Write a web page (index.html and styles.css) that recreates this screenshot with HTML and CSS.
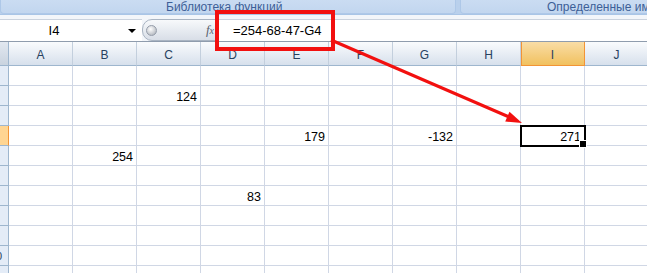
FILE: index.html
```html
<!DOCTYPE html>
<html lang="ru">
<head>
  <meta charset="UTF-8">
  <title>Лист1</title>
  <link rel="stylesheet" href="styles.css">
</head>
<body>
  <div class="ribbon">
    <div class="group group-func"><span>Библиотека функций</span></div>
    <div class="group group-names"><span>Определенные имена</span></div>
  </div>

  <div class="formula-bar">
    <div class="name-box">
      <span class="name-text">I4</span>
      <span class="dropdown"></span>
    </div>
    <div class="fx-pill">
      <span class="knob"></span>
      <span class="fx">f<small>x</small></span>
    </div>
    <div class="formula-input">=254-68-47-G4</div>
  </div>

  <table class="sheet">
    <colgroup>
      <col class="col-head">
      <col><col><col><col><col><col><col><col><col><col>
    </colgroup>
    <thead>
      <tr>
        <th class="corner"></th>
        <th>A</th><th>B</th><th>C</th><th>D</th><th>E</th>
        <th>F</th><th>G</th><th>H</th><th class="active">I</th><th>J</th>
      </tr>
    </thead>
    <tbody>
      <tr>
        <th><span>1</span></th>
        <td></td><td></td><td></td><td></td><td></td><td></td><td></td><td></td><td></td><td></td>
      </tr>
      <tr>
        <th><span>2</span></th>
        <td></td><td></td><td>124</td><td></td><td></td><td></td><td></td><td></td><td></td><td></td>
      </tr>
      <tr>
        <th><span>3</span></th>
        <td></td><td></td><td></td><td></td><td></td><td></td><td></td><td></td><td></td><td></td>
      </tr>
      <tr>
        <th class="active"><span>4</span></th>
        <td></td><td></td><td></td><td></td><td>179</td><td></td><td>-132</td><td></td><td class="selected">271</td><td></td>
      </tr>
      <tr>
        <th><span>5</span></th>
        <td></td><td>254</td><td></td><td></td><td></td><td></td><td></td><td></td><td></td><td></td>
      </tr>
      <tr>
        <th><span>6</span></th>
        <td></td><td></td><td></td><td></td><td></td><td></td><td></td><td></td><td></td><td></td>
      </tr>
      <tr>
        <th><span>7</span></th>
        <td></td><td></td><td></td><td>83</td><td></td><td></td><td></td><td></td><td></td><td></td>
      </tr>
      <tr>
        <th><span>8</span></th>
        <td></td><td></td><td></td><td></td><td></td><td></td><td></td><td></td><td></td><td></td>
      </tr>
      <tr>
        <th><span>9</span></th>
        <td></td><td></td><td></td><td></td><td></td><td></td><td></td><td></td><td></td><td></td>
      </tr>
      <tr>
        <th><span>10</span></th>
        <td></td><td></td><td></td><td></td><td></td><td></td><td></td><td></td><td></td><td></td>
      </tr>
      <tr>
        <th><span>11</span></th>
        <td></td><td></td><td></td><td></td><td></td><td></td><td></td><td></td><td></td><td></td>
      </tr>
    </tbody>
  </table>

  <!-- red callout drawn over the sheet -->
  <svg class="callout" width="647" height="273" viewBox="0 0 647 273">
    <rect x="217" y="12" width="116" height="37" fill="none" stroke="#f2100f" stroke-width="4"/>
    <line x1="331" y1="40" x2="508" y2="116.5" stroke="#f2100f" stroke-width="3"/>
    <polygon points="522,123 509.5,111.8 505.2,121.5" fill="#f2100f"/>
  </svg>
</body>
</html>
```

FILE: styles.css
```css
* {
  box-sizing: border-box;
}

body {
  margin: 0;
  width: 647px;
  height: 273px;
  overflow: hidden;
  position: relative;
  background: #fff;
  font-family: "Liberation Sans", Arial, sans-serif;
  color: #000;
}

/* ribbon strip */
.ribbon {
  display: flex;
  gap: 4px;
  height: 15px;
  background: #b9d0ec;
  border-bottom: 1px solid #a9c5e6;
  overflow: hidden;
}

.group {
  height: 14px;
  background: linear-gradient(#cadcf2, #c2d6ef);
  border: 1px solid #aec8e8;
  border-top: none;
  border-radius: 0 0 4px 4px;
  font-size: 12px;
  line-height: 14px;
  color: #3d5f97;
  white-space: nowrap;
}

.group-func {
  flex: 0 0 456px;
  padding-left: 165px;
}

.group-names {
  flex: 0 0 260px;
  padding-left: 86px;
}

/* formula bar */
.formula-bar {
  display: flex;
  height: 27px;
  padding-top: 4px;
  background: #f3f6fa;
  border-bottom: 1px solid #8f9cad;
}

.name-box {
  width: 142px;
  display: flex;
  align-items: center;
  background: #fff;
  border-top: 1px solid #cbd3de;
}

.name-text {
  width: 108px;
  text-align: center;
  font-size: 13px;
}

.dropdown {
  margin-left: 20px;
  width: 0;
  height: 0;
  border-left: 4px solid transparent;
  border-right: 4px solid transparent;
  border-top: 4px solid #000;
}

.fx-pill {
  width: 76px;
  display: flex;
  align-items: center;
  justify-content: space-between;
  padding: 0 3px 0 3px;
  background: linear-gradient(#f7f9fb, #d8dee7);
  border: 1px solid #a9b4c2;
  border-radius: 10px 0 0 10px;
}

.knob {
  width: 11px;
  height: 11px;
  border-radius: 50%;
  background: radial-gradient(circle at 40% 35%, #ffffff, #a2a8b1);
  border: 1px solid #959daa;
}

.fx {
  font-family: "Liberation Serif", serif;
  font-style: italic;
  font-size: 13px;
  color: #59636f;
}

.fx small {
  font-size: 10px;
}

.formula-input {
  flex: 1;
  display: flex;
  align-items: center;
  padding-left: 14px;
  background: #fff;
  border-top: 1px solid #cbd3de;
  border-left: 1px solid #a9b4c2;
  font-size: 13px;
}

/* grid */
.sheet {
  table-layout: fixed;
  border-collapse: separate;
  border-spacing: 0;
  width: 649px;
}

.sheet col {
  width: 64px;
}

.sheet col.col-head {
  width: 9px;
}

.sheet thead th {
  height: 24px;
  padding: 0 0 2px;
  vertical-align: bottom;
  font-size: 12px;
  font-weight: normal;
  line-height: 16px;
  color: #27415f;
  background: linear-gradient(#f9fbfd, #d7e0ec);
  border-right: 1px solid #c3cfdd;
  border-bottom: 1px solid #9eb6ce;
}

.sheet thead th.corner {
  background: linear-gradient(#e2e8f0, #c9d3df);
  border-right: 1px solid #9eb6ce;
}

.sheet thead th.active {
  background: linear-gradient(#f9dda6, #f1c15f);
  border-right: 1px solid #f29436;
  border-bottom: 1px solid #f29436;
  box-shadow: inset 1px 0 0 #f29436;
}

.sheet tbody th {
  height: 20px;
  padding: 0;
  overflow: hidden;
  font-size: 11px;
  font-weight: normal;
  color: #27415f;
  background: #e4ecf7;
  border-right: 1px solid #9eb6ce;
  border-bottom: 1px solid #9eb6ce;
}

.sheet tbody th span {
  display: block;
  width: 26px;
  margin-left: -17px;
  text-align: center;
}

.sheet tbody th.active {
  background: #ffd592;
  border-right-color: #f29436;
}

.sheet td {
  height: 20px;
  padding: 0 3px 0 0;
  vertical-align: bottom;
  text-align: right;
  font-size: 12.5px;
  line-height: 16px;
  border-right: 1px solid #d0d7e5;
  border-bottom: 1px solid #d0d7e5;
}

.sheet td.selected {
  position: relative;
  outline: 2px solid #000;
  outline-offset: -1px;
}

.sheet td.selected::after {
  content: "";
  position: absolute;
  right: -3px;
  bottom: -3px;
  width: 6px;
  height: 6px;
  background: #000;
  border: 1px solid #fff;
}

.callout {
  position: absolute;
  top: 0;
  left: 0;
  pointer-events: none;
}
```
